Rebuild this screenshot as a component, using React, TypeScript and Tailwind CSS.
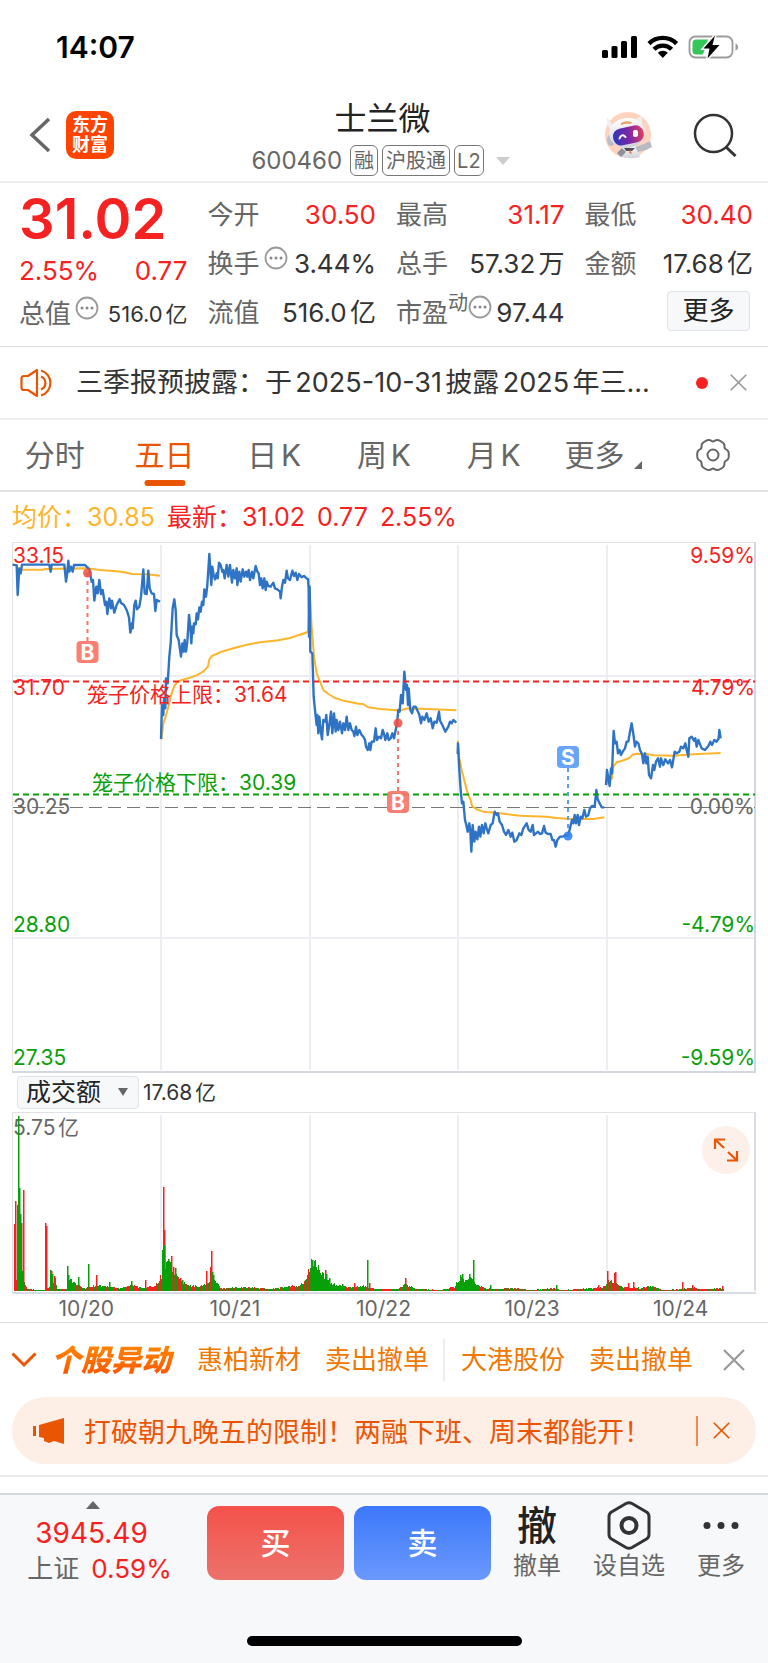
import { useState } from "react";

type Quote = {
  label: string;
  value: string;
  color: string;
  info?: boolean;
  sup?: string;
};

type Bar = [x: number, height: number, color: string];

const RED = "#f62222";
const GREEN = "#08a008";

const columns: Quote[][] = [
  [
    { label: "今开", value: "30.50", color: "text-[#f62222]" },
    { label: "换手", value: "3.44%", color: "text-[#333333]", info: true },
    { label: "流值", value: "516.0亿", color: "text-[#333333]" },
  ],
  [
    { label: "最高", value: "31.17", color: "text-[#f62222]" },
    { label: "总手", value: "57.32万", color: "text-[#333333]" },
    { label: "市盈", value: "97.44", color: "text-[#333333]", info: true, sup: "动" },
  ],
];

const tabs = ["分时", "五日", "日K", "周K", "月K"];

const dates = ["10/20", "10/21", "10/22", "10/23", "10/24"];

const alerts = [
  ["惠柏新材", "卖出撤单"],
  ["大港股份", "卖出撤单"],
];

// price traces, three units to a pixel
const earlyPrices = [
  "38,104 50,106 53,195 58,115 62,130 66,104 148,104 152,125 155,104 193,104 198,155 202,128 205,92 208,125 213,110 218,125 222,105 255,105 262,112 268,118 275,155 279,150 283,212 289,170 293,190 298,150 303,192 308,180 315,225 319,215 322,252 328,205 333,235 336,212 343,248 350,225 359,208 364,220 372,225 380,240 387,262 391,308 396,280 398,295 403,225 407,212 411,238 418,230 423,200 430,118 434,190 440,192 445,122 449,175 455,190 462,192 466,243 470,210 480,215",
  "483,627 486,525 490,555 492,505 496,535 498,445 503,460 508,380 512,340 516,270 518,235 523,208 527,240 530,315 536,330 543,380 547,340 551,365 554,330 558,365 562,335 567,255 571,290 574,340 577,290 580,310 582,280 587,283 590,250 594,268 598,232 602,245 606,215 610,225 613,178 618,200 622,165 628,72 634,165 637,110 641,135 645,148 650,130 653,145 657,98 662,105 667,125 670,120 674,145 680,105 685,140 690,105 696,158 700,120 705,145 710,115 712,165 718,125 722,155 728,118 733,140 738,125 742,140 746,120 750,150 756,125 760,145 767,108 772,125 776,130 780,165 784,145 788,175 793,145 797,180 800,155 805,168 812,170 820,158 825,175 832,178 840,185 842,205 846,170 850,150 855,158 860,122 864,145 870,150 877,122 882,138 887,128 892,150 897,132 905,142 912,138 920,145 926,150",
];

const latePrices = [
  "24,145 26,175 27,320 29,170 31,365 37,370 41,500 46,550 50,585 52,555 55,610 58,560 62,600 66,628 70,570 76,575 79,555 83,615 88,585 93,545 97,610 102,550 107,605 110,570 115,600 120,575 126,610 130,580 135,600 140,560 145,600 150,580 155,600 160,605 163,618 168,590 172,615 178,600 185,615 190,620 195,630 198,650 203,660 208,640 211,660 215,635 222,635 227,595 231,630 237,620 243,625 248,600 252,612 256,630 262,610 266,630 272,625 277,610 282,625 286,605 291,580 295,540 299,545 303,495 308,520 313,425 318,480 321,465 324,525 326,475 331,540 336,550 341,530 347,530 354,545 358,555 363,580 367,560 373,570 380,550 386,575 392,565 398,595 403,575 410,578 417,545 420,572 427,585 436,605 445,590 450,575 455,580 460,570 469,578",
  "473,672 474,640 478,720 482,780 486,820 490,815 495,870 499,885 503,905 508,880 511,905 514,965 518,885 523,935 527,905 532,928 537,890 541,920 546,885 551,910 556,880 560,895 565,910 572,885 578,880 584,845 590,855 594,850 599,875 606,885 612,905 618,915 625,900 632,920 637,908 643,935 650,930 658,910 664,915 670,895 680,880 686,900 692,905 698,885 702,915 708,910 714,905 720,912 726,910 732,888 737,908 744,912 752,912 757,930 762,930 767,950 772,930 780,920 788,920 796,915 804,918 810,895 816,870 820,880 824,855 828,880 833,855 837,885 842,860 847,865 853,840 858,860 865,855 870,835 876,828 884,830 889,780 893,808 898,818 905,832 913,832",
  "918,765 921,720 925,745 929,768 933,715 936,730 939,650 941,603 945,640 950,635 954,670 959,660 963,675 968,665 975,655 980,635 985,635 989,610 995,580 1000,612 1005,650 1009,635 1015,640 1020,660 1026,672 1030,700 1035,670 1039,700 1043,680 1047,735 1053,745 1059,705 1063,720 1068,695 1074,685 1080,710 1083,685 1090,705 1096,688 1104,700 1110,690 1116,712 1124,665 1130,670 1138,665 1143,650 1150,655 1156,640 1160,660 1165,680 1168,625 1175,620 1182,632 1186,625 1190,650 1195,630 1205,655 1215,660 1225,648 1231,635 1236,645 1243,630 1250,635 1256,625 1258,600 1262,625",
];

const earlyAverages = [
  "38,104 50,106 56,119 130,119 135,117 260,115 300,120 350,124 375,127 395,132 440,133 480,137",
  "484,628 490,580 497,560 505,530 512,500 522,470 530,458 545,450 570,443 590,436 608,426 624,410 628,388 636,378 665,365 700,355 740,344 780,337 835,331 870,324 900,314 926,305",
];

const lateAverages = [
  "0,315 12,311 24,305 30,200 35,290 42,380 50,430 60,455 70,480 85,492 105,504 130,512 150,516 175,521 190,522 205,532 240,537 290,541 305,540 325,535 400,538 469,541",
  "473,632 477,680 485,720 495,760 503,790 512,810 516,828 530,838 550,845 600,850 660,857 740,860 770,864 810,867 880,867 913,862",
  "918,765 928,750 936,745 940,710 950,697 965,693 988,684 998,674 1010,671 1040,672 1060,676 1120,677 1180,673 1262,669",
];

// turnover bars: base profile first, single peaks on top
const profile: [number, number][] = [
  [14, 8], [17, 14], [24, 8], [27, 2], [44, 1], [49, 4], [55, 12], [57, 2], [66, 2], [69, 15], [73, 9], [77, 6], [84, 3], [95, 6], [105, 5], [120, 3], [130, 6], [145, 3], [155, 6], [161, 16], [166, 32],
  [173, 22], [180, 10], [190, 5], [200, 5], [207, 8], [215, 10], [221, 3], [245, 4], [270, 2], [285, 4], [300, 6], [306, 12], [311, 30], [315, 29], [320, 20], [325, 13], [335, 6], [350, 4], [365, 5], [375, 2],
  [398, 2], [405, 7], [415, 2], [440, 1], [454, 4], [460, 15], [465, 10], [471, 13], [476, 6], [485, 3], [495, 2], [515, 3], [530, 1], [555, 3], [562, 1], [590, 3], [603, 4], [608, 11], [616, 9], [622, 4], [640, 3], [650, 5], [662, 1],
  [682, 2], [693, 4], [700, 2], [722, 3],
];

const peaks: Bar[] = [
  [14, 67, RED], [15, 90, RED], [17, 86, GREEN], [18, 175, GREEN], [19, 103, GREEN], [20, 77, GREEN], [21, 68, RED], [23, 101, RED], [22, 20, GREEN], [45, 68, RED], [46, 65, RED], [50, 21, GREEN], [51, 20, RED],
  [52, 17, GREEN], [54, 15, RED], [67, 25, GREEN], [68, 16, GREEN], [78, 14, GREEN], [88, 27, GREEN], [96, 16, RED], [109, 9, GREEN], [131, 10, GREEN], [145, 11, RED], [162, 41, GREEN], [163, 104, RED],
  [164, 61, RED], [164, 46, GREEN], [168, 32, GREEN], [171, 35, RED], [173, 24, RED], [175, 23, GREEN], [180, 13, RED], [182, 11, GREEN], [206, 20, RED], [210, 24, RED], [211, 40, RED], [212, 19, GREEN], [213, 16, GREEN],
  [311, 31, RED], [312, 31, GREEN], [325, 21, RED], [326, 17, GREEN], [329, 13, GREEN], [342, 7, GREEN], [354, 8, RED], [367, 31, GREEN], [369, 8, RED], [405, 13, RED], [460, 16, GREEN], [462, 17, GREEN], [469, 17, GREEN],
  [473, 31, GREEN], [490, 6, GREEN], [556, 6, GREEN], [598, 6, RED], [607, 20, RED], [614, 18, RED], [615, 19, RED], [628, 8, RED], [633, 9, RED], [647, 5, GREEN], [652, 5, GREEN], [682, 9, RED], [692, 6, RED], [722, 5, RED],
];

function noise(n: number) {
  const v = Math.sin(n * 127.1) * 43758.5453;
  return v - Math.floor(v);
}

const baseBars: Bar[] = [];
for (let x = 14; x < 724; x++) {
  const next = profile.findIndex((p) => p[0] >= x);
  const b = profile[next === -1 ? profile.length - 1 : next];
  const a = profile[Math.max(next - 1, 0)];
  const t = b[0] === a[0] ? 0 : (x - a[0]) / (b[0] - a[0]);
  const h = a[1] + (b[1] - a[1]) * t;
  const greenDay = (x > 309 && x < 345) || (x > 458 && x < 476);
  const color = noise(x + 5) < (greenDay ? 0.06 : 0.4) ? RED : GREEN;
  baseBars.push([x, Math.max(1, Math.round(h * (0.75 + noise(x) * 0.4))), color]);
}

const gearPath =
  Array.from({ length: 120 }, (_, i) => {
    const a = (i * Math.PI) / 60;
    const r = 15.8 - 2.2 * Math.pow((1 - Math.cos(6 * a)) / 2, 3);
    return `${i ? "L" : "M"}${(17 + r * Math.cos(a)).toFixed(2)} ${(17 + r * Math.sin(a)).toFixed(2)}`;
  }).join("") + "Z";

function InfoDots() {
  return (
    <svg viewBox="0 0 24 24" className="mb-3 h-6 w-6 shrink-0">
      <circle cx="12" cy="12" r="10.5" fill="none" stroke="#999999" strokeWidth="1.8" />
      <circle cx="7" cy="12" r="1.5" fill="#888888" />
      <circle cx="12" cy="12" r="1.5" fill="#888888" />
      <circle cx="17" cy="12" r="1.5" fill="#888888" />
    </svg>
  );
}

function Cross({ className }: { className: string }) {
  return (
    <svg viewBox="0 0 22 22" className={className} fill="none" stroke="currentColor" strokeWidth="2.2">
      <path d="M1 1L21 21M21 1L1 21" />
    </svg>
  );
}

function StatusBar() {
  return (
    <div className="flex h-[90px] items-center justify-between pt-1 pr-[29px] pl-[56px]">
      <span className="text-[30px] leading-none font-semibold text-black">14:07</span>
      <svg viewBox="0 0 138 26" className="h-[26px] w-[138px]">
        <rect x="1" y="16" width="6" height="8" rx="1.5" />
        <rect x="10.5" y="12" width="6" height="12" rx="1.5" />
        <rect x="20" y="7" width="6" height="17" rx="1.5" />
        <rect x="30" y="2" width="6" height="22" rx="1.5" />
        <g fill="none" stroke="#000" strokeWidth="4.4">
          <path d="M48 9.6A19.5 19.5 0 0 1 75.6 9.6" />
          <path d="M53 15.2A12.5 12.5 0 0 1 70.6 15.2" />
        </g>
        <path d="M61.8 24L56.8 18.8A7 7 0 0 1 66.8 18.8Z" />
        <rect x="88.5" y="2.5" width="43" height="21" rx="6" fill="none" stroke="#9b9b9b" strokeWidth="1.8" />
        <path d="M134.5 9.5C138 10.5 138 15.5 134.5 16.5Z" fill="#9b9b9b" />
        <path d="M95 5.5H107L102 20.5H95Q91.5 20.5 91.5 17V9Q91.5 5.5 95 5.5Z" fill="#34c759" />
        <path d="M114 1.5L102.5 14.5H108.5L106.5 24.5L118.5 11H111.5Z" stroke="#fff" strokeWidth="3" paintOrder="stroke" />
      </svg>
    </div>
  );
}

function Robot() {
  return (
    <svg viewBox="0 0 48 48" className="h-12 w-12">
      <defs>
        <linearGradient id="visor" x1="0" y1="0" x2="1" y2="0">
          <stop offset="0" stopColor="#2b37b8" />
          <stop offset="0.5" stopColor="#7a27a8" />
          <stop offset="1" stopColor="#e0405f" />
        </linearGradient>
        <linearGradient id="shell" x1="0" y1="0" x2="0" y2="1">
          <stop offset="0" stopColor="#ffffff" />
          <stop offset="1" stopColor="#cfcfd9" />
        </linearGradient>
      </defs>
      <circle cx="24" cy="24" r="23" fill="#ffd3bd" />
      <path d="M3 7Q5 6 8 14L6 18Q2 12 3 7ZM32 8L37 5Q39 10 37 15Z" fill="#f1eff2" />
      <path d="M18 35L32 34L36 46Q26 49 15 45Z" fill="url(#shell)" />
      <path d="M31 36L40 33L46 30L48 36L42 39L34 41Z" fill="#b9b9c4" />
      <path d="M18 37L13 42L17 46L22 41Z" fill="#8f8f9c" />
      <path d="M20 37H31L28 40H22Z" fill="#4c4c5b" />
      <path d="M26 38L28 43L25 42Z" fill="#ef7b3d" />
      <ellipse cx="7" cy="29" rx="4" ry="6" fill="#bdbdc9" />
      <ellipse cx="23" cy="22" rx="18" ry="15" fill="url(#shell)" transform="rotate(-8 23 22)" />
      <path d="M17 12Q22 9 28 11L27 13Q22 12 17 14Z" fill="#e8a468" />
      <rect x="9" y="16" width="31" height="17" rx="8" fill="url(#visor)" transform="rotate(-12 24 25)" />
      <path d="M15.5 27.5Q17.5 22 21.5 26" fill="none" stroke="#fff" strokeWidth="2" strokeLinecap="round" />
      <rect x="29" y="19" width="5" height="7" rx="2" fill="#fff" />
    </svg>
  );
}

function Header() {
  return (
    <header className="grid h-[93px] grid-cols-[1fr_auto_1fr] items-center border-b-2 border-[#eeeeee] pr-[31px] pb-[2px] pl-[28px]">
      <div className="flex items-center gap-[14px]">
        <button aria-label="返回">
          <svg viewBox="0 0 24 36" className="h-9 w-6" fill="none" stroke="#666666" strokeWidth="3.5">
            <path d="M21 2L4 18L21 34" />
          </svg>
        </button>
        <div className="grid h-12 w-12 place-content-center rounded-[10px] bg-[#ff4400] text-[18px] leading-5 font-bold text-white">
          <span>东方</span>
          <span>财富</span>
        </div>
      </div>
      <div className="flex flex-col items-center gap-2 pt-2">
        <h1 className="text-[32px] leading-9 text-[#222222]">士兰微</h1>
        <button className="flex items-center gap-1 pr-1 text-[20px] leading-none text-[#666666]">
          <span className="mr-1 text-2xl leading-none">600460</span>
          <span className="flex h-[31px] items-center rounded-md border border-[#777777] px-[3px]">融</span>
          <span className="flex h-[31px] items-center rounded-md border border-[#777777] px-[3px]">沪股通</span>
          <span className="flex h-[31px] items-center rounded-md border border-[#777777] px-[2px]">L2</span>
          <svg viewBox="0 0 14 8" className="ml-2 h-2 w-[14px]">
            <path d="M0 0H14L7 8Z" fill="#cccccc" />
          </svg>
        </button>
      </div>
      <div className="flex items-center justify-end gap-[41px]">
        <Robot />
        <button aria-label="搜索">
          <svg viewBox="0 0 44 44" className="h-11 w-11" fill="none" stroke="#333333" strokeWidth="2.5">
            <circle cx="20.5" cy="20.5" r="18.5" />
            <path d="M33 34L42.5 43" strokeWidth="3" />
          </svg>
        </button>
      </div>
    </header>
  );
}

function QuoteCell({ quote }: { quote: Quote }) {
  return (
    <div className="flex h-[49px] items-center">
      <dt className="flex items-center gap-1 text-[#666666]">
        {quote.label}
        {quote.sup && <sup className="-mx-1 text-xl leading-none">{quote.sup}</sup>}
        {quote.info && <InfoDots />}
      </dt>
      <dd className={"ml-auto " + quote.color}>{quote.value}</dd>
    </div>
  );
}

function Stats() {
  return (
    <section className="grid grid-cols-4 gap-5 border-b border-[#dddddd] pt-[7px] pr-[15px] pb-[9px] pl-[19px] text-[26px] leading-none whitespace-nowrap">
      <div>
        <div className="flex h-[57px] items-center text-[56px] font-semibold text-[#f62222]">31.02</div>
        <div className="flex h-[47px] items-center justify-between text-[#f62222]">
          <span>2.55%</span>
          <span>0.77</span>
        </div>
        <div className="flex h-[39px] items-center gap-1">
          <span className="text-[#666666]">总值</span>
          <InfoDots />
          <span className="ml-auto text-[22px] text-[#333333]">516.0亿</span>
        </div>
      </div>
      {columns.map((column, i) => (
        <dl key={i}>
          {column.map((quote) => (
            <QuoteCell key={quote.label} quote={quote} />
          ))}
        </dl>
      ))}
      <div>
        <dl>
          <QuoteCell quote={{ label: "最低", value: "30.40", color: "text-[#f62222]" }} />
          <QuoteCell quote={{ label: "金额", value: "17.68亿", color: "text-[#333333]" }} />
        </dl>
        <div className="flex h-[49px] items-center justify-end pr-[3px] pb-1">
          <button className="h-10 w-[83px] rounded border border-[#dfe2e8] bg-[#f7f8fa] text-[#222222]">更多</button>
        </div>
      </div>
    </section>
  );
}

function Notice() {
  return (
    <div className="flex h-[73px] items-center border-b-2 border-[#eeeeee] pr-[21px] pl-5">
      <svg viewBox="0 0 36 30" className="h-[30px] w-9 shrink-0" fill="none" stroke="#ea5504" strokeWidth="2.2">
        <path d="M17 2V28L8 22H4Q1.5 22 1.5 19.5V10.5Q1.5 8 4 8H8Z" strokeLinejoin="round" />
        <path d="M21 2.5A13 13 0 0 1 21 27.5M21 8.5A7 7 0 0 1 21 21.5" />
      </svg>
      <p className="ml-5 text-[27px] leading-none whitespace-nowrap text-[#333333]">三季报预披露：于2025-10-31披露2025年三...</p>
      <span className="ml-auto h-3 w-3 shrink-0 rounded-full bg-[#f62222]" />
      <button aria-label="关闭公告" className="ml-[22px] text-[#999999]">
        <Cross className="h-[17px] w-[17px]" />
      </button>
    </div>
  );
}

function Tabs() {
  const [active, setActive] = useState("五日");

  return (
    <nav className="grid h-[72px] grid-cols-7 border-b-2 border-[#dfe1e6] text-[30px] leading-none">
      {tabs.map((tab) => (
        <button
          key={tab}
          onClick={() => setActive(tab)}
          className={"relative " + (tab === active ? "text-[#ea5504]" : "text-[#666666]")}
        >
          {tab}
          {tab === active && <span className="absolute bottom-1 left-1/2 h-[6px] w-[41px] -translate-x-1/2 rounded-full bg-[#ea5504]" />}
        </button>
      ))}
      <button className="flex items-center justify-center gap-[10px] text-[#666666]">
        更多
        <svg viewBox="0 0 8 8" className="mt-5 h-2 w-2">
          <path d="M8 0V8H0Z" fill="#666666" />
        </svg>
      </button>
      <button aria-label="设置" className="grid place-content-center">
        <svg viewBox="0 0 34 34" className="h-[34px] w-[34px]" fill="none" stroke="#666666" strokeWidth="2">
          <path d={gearPath} />
          <circle cx="17" cy="17" r="5.5" />
        </svg>
      </button>
    </nav>
  );
}

function Marker({ x, dotY, tagY, label, color, dot }: { x: number; dotY: number; tagY: number; label: string; color: string; dot: string }) {
  return (
    <g>
      <path d={`M${x} ${dotY}V${tagY}`} stroke={color} strokeWidth="2" strokeDasharray="4 4" />
      <circle cx={x} cy={dotY} r="4.5" fill={dot} fillOpacity="0.85" />
      <rect x={x - 11} y={tagY - 11} width="22" height="22" rx="4" fill={color} fillOpacity="0.92" />
      <text x={x} y={tagY + 8} textAnchor="middle" fill="#fff" fontSize="21" fontWeight="700">
        {label}
      </text>
    </g>
  );
}

function Traces({ offset, lines, color, width }: { offset: number; lines: string[]; color: string; width: number }) {
  return (
    <g transform={`translate(${offset} 530) scale(0.33333)`} fill="none" stroke={color} strokeWidth={width * 3} strokeLinejoin="round">
      {lines.map((points) => (
        <polyline key={points} points={points} />
      ))}
    </g>
  );
}

function PriceChart() {
  return (
    <svg viewBox="12 542 744 531" className="block h-auto w-full" fontSize="21">
      <g fill="none" stroke="#eceef3" strokeWidth="2">
        <path d="M161 545V1070M310 545V1070M458 545V1070M607 545V1070M13 676H755M13 938H755" />
      </g>
      <path d="M12.5 1072V542.5H755" fill="none" stroke="#dfe3e8" />
      <path d="M755 542V1072H12" fill="none" stroke="#d3d7de" strokeWidth="2" />
      <path d="M13 807.5H755" stroke="#777777" strokeWidth="1" strokeDasharray="13 6" />
      <Traces offset={0} lines={earlyAverages} color="#fdb52b" width={2} />
      <Traces offset={300} lines={lateAverages} color="#fdb52b" width={2} />
      <Traces offset={0} lines={earlyPrices} color="#2f74c4" width={2.4} />
      <Traces offset={300} lines={latePrices} color="#2f74c4" width={2.4} />
      <path d="M13 681.5H755" stroke={RED} strokeWidth="2" strokeDasharray="6 4" />
      <path d="M13 794.5H755" stroke={GREEN} strokeWidth="2" strokeDasharray="6 4" />
      <Marker x={87.5} dotY={573} tagY={652} label="B" color="#fb7466" dot="#ef4d42" />
      <Marker x={398} dotY={723} tagY={802} label="B" color="#fb7466" dot="#ef4d42" />
      <Marker x={568} dotY={836} tagY={757} label="S" color="#5a9cfa" dot="#2b7df5" />
      <g fill={RED}>
        <text x="13" y="563">33.15</text>
        <text x="13" y="695">31.70</text>
        <text x="755" y="563" textAnchor="end">9.59%</text>
        <text x="755" y="695" textAnchor="end">4.79%</text>
        <text x="87" y="702">笼子价格上限：31.64</text>
      </g>
      <g fill="#666666">
        <text x="13" y="814">30.25</text>
        <text x="755" y="814" textAnchor="end">0.00%</text>
      </g>
      <g fill={GREEN}>
        <text x="92" y="790">笼子价格下限：30.39</text>
        <text x="13" y="932">28.80</text>
        <text x="13" y="1065">27.35</text>
        <text x="755" y="932" textAnchor="end">-4.79%</text>
        <text x="755" y="1065" textAnchor="end">-9.59%</text>
      </g>
    </svg>
  );
}

function VolumeChart() {
  return (
    <div className="relative">
      <svg viewBox="12 1112 744 182" className="block h-auto w-full" fontSize="21">
        <path d="M161 1115V1291M310 1115V1291M458 1115V1291M607 1115V1291" stroke="#eceef3" strokeWidth="2" />
        <path d="M12.5 1292V1112.5H755" fill="none" stroke="#dfe3e8" />
        <path d="M755 1112V1291M12 1293H756" fill="none" stroke="#d9dce2" strokeWidth="2" />
        <text x="13" y="1135" fill="#666666">5.75亿</text>
        {baseBars.map(([x, height, color]) => (
          <rect key={x} x={x} y={1291 - height} width="1" height={height} fill={color} />
        ))}
        {peaks.map(([x, height, color], i) => (
          <rect key={i} x={x} y={1291 - height} width="1.5" height={height} fill={color} />
        ))}
      </svg>
      <button aria-label="全屏" className="absolute top-[14px] right-[6px] rounded-full bg-[#fdf0ea]">
        <svg viewBox="0 0 48 48" className="h-12 w-12" fill="none" stroke="#ea5504" strokeWidth="2.2">
          <path d="M13 23V13.5H23M13 13.5L22 22M35 25V34.5H25M35 34.5L26 26" />
        </svg>
      </button>
    </div>
  );
}

function Charts() {
  return (
    <section className="border-b border-[#dddddd] px-3">
      <div className="flex h-[50px] items-center gap-3 pt-px text-[25px] leading-none text-[#f62222]">
        <span className="text-[#fdb52b]">均价：30.85</span>
        <span>最新：31.02</span>
        <span>0.77</span>
        <span>2.55%</span>
      </div>
      <PriceChart />
      <div className="flex h-[39px] items-center gap-1 pl-[5px] text-[21px] leading-none text-[#333333]">
        <div className="relative">
          <select
            aria-label="指标"
            className="h-[33px] w-[122px] appearance-none rounded border border-[#dfe2e8] bg-[#f7f8fa] pl-2 text-[25px] leading-none text-[#222222]"
          >
            <option>成交额</option>
            <option>成交量</option>
          </select>
          <svg viewBox="0 0 10 8" className="pointer-events-none absolute top-3 right-[11px] h-2 w-[10px]">
            <path d="M0 0H10L5 8Z" fill="#666666" />
          </svg>
        </div>
        <span>17.68亿</span>
      </div>
      <VolumeChart />
      <div className="flex h-7 items-center pr-px text-[21px] leading-none text-[#666666]">
        {dates.map((date) => (
          <span key={date} className="flex-1 text-center">
            {date}
          </span>
        ))}
      </div>
    </section>
  );
}

function Alerts() {
  return (
    <div className="flex h-[74px] items-center pr-[23px] pb-px pl-[11px] text-[26px] leading-none whitespace-nowrap text-[#f07800]">
      <button aria-label="展开">
        <svg viewBox="0 0 26 16" className="h-4 w-[26px]" fill="none" stroke="#ea5504" strokeWidth="3">
          <path d="M1.5 1.5L13 13L24.5 1.5" />
        </svg>
      </button>
      <strong className="ml-[14px] bg-linear-to-b from-[#ff8a00] to-[#ff4d00] bg-clip-text pr-2 text-[30px] leading-9 font-black text-transparent italic">
        个股异动
      </strong>
      <div className="flex flex-1 items-center justify-between pr-[30px] pl-[18px]">
        {alerts.map(([stock, event], i) => (
          <a key={stock} href="#" className={"flex gap-6 " + (i > 0 ? "border-l-2 border-[#eeeeee] py-2 pl-4" : "")}>
            <span>{stock}</span>
            <span>{event}</span>
          </a>
        ))}
      </div>
      <button aria-label="关闭异动" className="text-[#999999]">
        <Cross className="h-[22px] w-[22px]" />
      </button>
    </div>
  );
}

function Banner() {
  return (
    <div className="border-b-2 border-[#eaeaea] px-3 pb-[11px]">
      <div className="flex h-[67px] items-center rounded-full bg-[#fdeee6] pr-[26px] pl-5 text-[#ea5504]">
        <svg viewBox="0 0 32 28" className="h-7 w-8 shrink-0" fill="currentColor">
          <path d="M1 9H4V19H1ZM7 8L32 1V27L22 24L17 26L12 24V21L7 20Z" />
        </svg>
        <p className="ml-5 pt-1 text-[27px] leading-none whitespace-nowrap">打破朝九晚五的限制！两融下班、周末都能开！</p>
        <button aria-label="关闭横幅" className="ml-auto flex h-[30px] items-center border-l-2 border-[#f08a50] pl-[15px]">
          <Cross className="h-[17px] w-[17px]" />
        </button>
      </div>
    </div>
  );
}

function BottomBar() {
  return (
    <footer className="mt-4 border-t-2 border-[#d3d6db] bg-[#f7f8fa] pb-[17px]">
      <div className="flex pt-[6px] leading-none whitespace-nowrap">
        <button className="flex w-[207px] flex-col items-center pr-2 text-[#f62222]">
          <svg viewBox="0 0 14 8" className="mr-[14px] h-2 w-[14px]">
            <path d="M7 0L14 8H0Z" fill="#666666" />
          </svg>
          <span className="mt-2 mr-4 text-[28px] leading-8">3945.49</span>
          <span className="mt-1 flex gap-3 text-[26px] leading-8">
            <span className="text-[#666666]">上证</span>0.59%
          </span>
        </button>
        <div className="flex h-[79px] flex-1 gap-[10px] pt-[5px] text-[30px] font-medium text-white">
          <button className="flex-1 rounded-xl bg-linear-to-b from-[#f4514a] to-[#ec716b]">买</button>
          <button className="flex-1 rounded-xl bg-linear-to-b from-[#3c78fa] to-[#6a98fd]">卖</button>
        </div>
        <div className="flex w-[277px] justify-between pr-[23px] pl-[22px] text-2xl leading-8 text-[#666666]">
          <button className="flex flex-col items-center">
            <span className="flex h-[49px] items-center text-[40px] leading-none font-medium text-[#222222]">撤</span>
            撤单
          </button>
          <button className="flex flex-col items-center">
            <svg viewBox="0 0 44 49" className="h-[49px] w-11" fill="none" stroke="#333333">
              <path d="M19 2.5Q22 1 25 2.5L39.5 11Q42 12.5 42 15.5V33.5Q42 36.5 39.5 38L25 46.5Q22 48 19 46.5L4.5 38Q2 36.5 2 33.5V15.5Q2 12.5 4.5 11Z" strokeWidth="3" />
              <circle cx="22" cy="24.5" r="7.5" strokeWidth="4" />
            </svg>
            设自选
          </button>
          <button className="flex flex-col items-center">
            <svg viewBox="0 0 36 49" className="h-[49px] w-9" fill="#333333">
              <circle cx="4" cy="24.5" r="3.5" />
              <circle cx="18" cy="24.5" r="3.5" />
              <circle cx="32" cy="24.5" r="3.5" />
            </svg>
            更多
          </button>
        </div>
      </div>
      <div className="mx-auto mt-[51px] h-[10px] w-[275px] rounded-full bg-black" />
    </footer>
  );
}

function App() {
  return (
    <main className="min-h-screen overflow-hidden bg-white font-['Inter','Noto_Sans_CJK_SC',sans-serif] [text-autospace:normal]">
      <StatusBar />
      <Header />
      <Stats />
      <Notice />
      <Tabs />
      <Charts />
      <Alerts />
      <Banner />
      <BottomBar />
    </main>
  );
}

export default App;
